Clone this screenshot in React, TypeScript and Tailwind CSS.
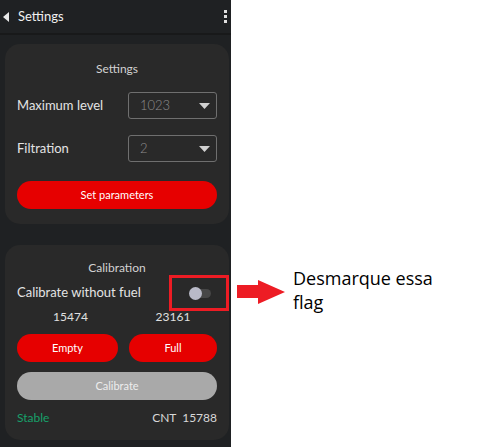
import React from "react";

function Select({ value }: { value: string }) {
  return (
    <div className="w-[89px] h-[27px] border border-[#6f6f6f] rounded-[3px] flex items-center justify-between pl-[11px] pr-[6px]">
      <span className="text-[13px] leading-none text-[#8e8e8e] font-light">{value}</span>
      <svg width="11" height="6" viewBox="0 0 11 6">
        <path d="M0 0 H11 L5.5 6 Z" fill="#d0d0d0" />
      </svg>
    </div>
  );
}

export default function App() {
  return (
    <div className="w-[479px] h-[447px] bg-white flex relative overflow-hidden" style={{ fontFamily: "Lato, 'Noto Sans', sans-serif" }}>
      <div className="w-[231px] h-full bg-[#1f2123] flex flex-col">
        <div className="h-[33px] shrink-0 flex items-center justify-between border-b-2 border-[#18191a] box-content">
          <div className="flex items-center">
            <svg width="6" height="10" viewBox="0 0 6 10" className="ml-[3px]">
              <path d="M6 0 V10 L0 5 Z" fill="#e8e8e8" />
            </svg>
            <span className="ml-[9px] text-[13px] text-[#f0f0f0]">Settings</span>
          </div>
          <div className="flex flex-col gap-[2px] mr-[4px]">
            <span className="w-[3px] h-[3px] bg-[#e0e0e0]" />
            <span className="w-[3px] h-[3px] bg-[#e0e0e0]" />
            <span className="w-[3px] h-[3px] bg-[#e0e0e0]" />
          </div>
        </div>

        <div className="pl-[5px] pt-[9px] flex flex-col">
          <div className="w-[224px] bg-[#292929] rounded-[15px] h-[180px] px-[12px] pt-[17px] flex flex-col">
            <div className="text-center text-[12px] leading-[16px] text-[#d2d2d2]">Settings</div>
            <div className="mt-[15px] flex items-center justify-between">
              <span className="text-[13px] text-[#e4e4e4]">Maximum level</span>
              <Select value="1023" />
            </div>
            <div className="mt-[16px] flex items-center justify-between">
              <span className="text-[13px] text-[#e4e4e4]">Filtration</span>
              <Select value="2" />
            </div>
            <button className="mt-[19px] h-[28px] rounded-full bg-[#e60000] text-white text-[11px]">Set parameters</button>
          </div>

          <div className="w-[224px] mt-[21px] bg-[#292929] rounded-[15px] h-[195px] px-[12px] pt-[15px] flex flex-col">
            <div className="text-center text-[12px] leading-[16px] text-[#d2d2d2]">Calibration</div>
            <div className="mt-[7px] h-[20px] flex items-center justify-between">
              <span className="text-[13px] text-[#e4e4e4]">Calibrate without fuel</span>
              <div className="relative w-[21px] h-[9px] mr-[6px] rounded-full bg-[#474747]">
                <div className="absolute left-[-1px] top-[-2px] w-[13px] h-[13px] rounded-full bg-[#b9bac8]" />
              </div>
            </div>
            <div className="mt-[6px] flex text-[12px] leading-[16px] text-[#e0e0e0]">
              <span className="w-[101px] text-center pl-[6px]">15474</span>
              <span className="ml-[11px] w-[88px] text-center">23161</span>
            </div>
            <div className="mt-[9px] flex gap-[11px]">
              <button className="w-[101px] h-[28px] rounded-full bg-[#e60000] text-white text-[11px]">Empty</button>
              <button className="w-[88px] h-[28px] rounded-full bg-[#e60000] text-white text-[11px]">Full</button>
            </div>
            <button className="mt-[10px] h-[28px] rounded-full bg-[#a9a9a9] text-[#ededed] text-[11px]">Calibrate</button>
            <div className="mt-[10px] flex justify-between text-[12px] leading-[16px]">
              <span className="text-[#17a06a]">Stable</span>
              <span className="text-[#d8d8d8]">CNT&nbsp; 15788</span>
            </div>
          </div>
        </div>
      </div>

      <div className="flex-1 pl-[62px] pt-[266px]">
        <div className="text-[18px] leading-[24px] text-black" style={{ fontFamily: "'Open Sans', 'Liberation Sans', sans-serif" }}>
          Desmarque essa
          <br />
          flag
        </div>
      </div>

      <div className="absolute left-[169px] top-[275px] w-[60px] h-[36px] border-[3px] border-[#ed1c24]" />
      <svg className="absolute left-[237px] top-[280px]" width="49" height="24" viewBox="0 0 49 24">
        <path d="M0 5 H21 V0 L48 12 L21 24 V18 H0 Z" fill="#ed1c24" />
      </svg>
    </div>
  );
}
